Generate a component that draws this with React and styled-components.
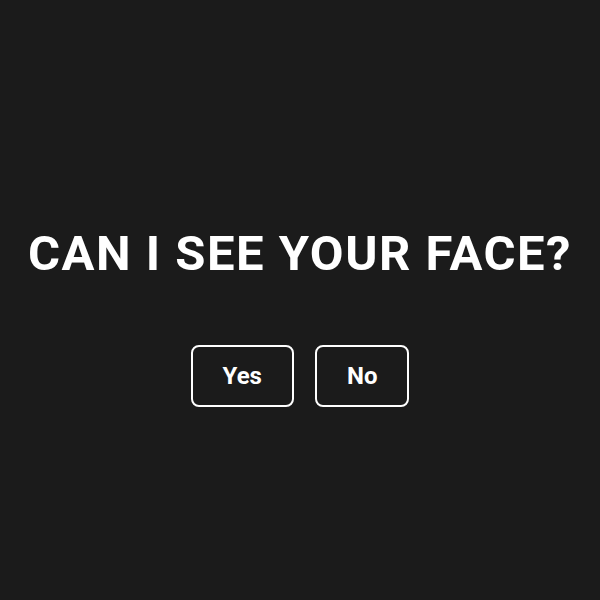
import React from "react";
import styled, { createGlobalStyle } from "styled-components";

const Global = createGlobalStyle`
  html, body { margin: 0; padding: 0; background: #1b1b1b; }
  body { font-family: Roboto, "Liberation Sans", sans-serif; }
`;

const Page = styled.main`
  box-sizing: border-box;
  width: 600px;
  height: 600px;
  padding-top: 35px;
  display: flex;
  flex-direction: column;
  align-items: center;
  justify-content: center;
  background: #1b1b1b;
  color: #fff;
`;

const Title = styled.h1`
  margin: 0 0 67px;
  font-family: Roboto, "Liberation Sans", sans-serif;
  font-weight: 700;
  font-size: 49px;
  letter-spacing: 1.5px;
  line-height: 1;
  text-transform: uppercase;
  white-space: nowrap;
`;

const Actions = styled.div`
  display: flex;
  gap: 21px;
`;

const Button = styled.button`
  box-sizing: border-box;
  height: 62px;
  padding: 0 30px;
  background: transparent;
  color: #fff;
  border: 2px solid #fff;
  border-radius: 8px;
  font-family: Roboto, "Liberation Sans", sans-serif;
  font-weight: 700;
  font-size: 24px;
  cursor: pointer;
`;

export default function App() {
  return (
    <>
      <Global />
      <Page>
        <Title>Can I see your face?</Title>
        <Actions>
          <Button>Yes</Button>
          <Button>No</Button>
        </Actions>
      </Page>
    </>
  );
}
